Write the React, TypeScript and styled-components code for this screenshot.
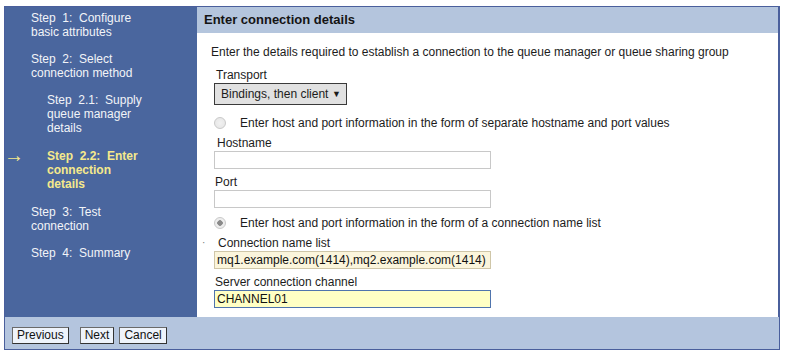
import React from 'react';
import styled, { createGlobalStyle } from 'styled-components';

const GlobalStyle = createGlobalStyle`
  html, body {
    margin: 0;
    padding: 0;
    background: #ffffff;
  }
  body {
    font-family: "Liberation Sans", Arial, sans-serif;
    font-size: 12px;
    color: #1c1c1c;
  }
`;

const Frame = styled.div`
  box-sizing: border-box;
  width: 776px;
  margin: 6px 0 0 4px;
  border: 1px solid #4a5f9c;
  display: flex;
  flex-direction: column;
`;

const Main = styled.div`
  display: flex;
  height: 310px;
`;

const Sidebar = styled.nav`
  box-sizing: border-box;
  width: 192px;
  flex: none;
  background: #4a669e;
  padding: 4px 52px 0 26px;
`;

const StepItem = styled.div<{ $sub?: boolean; $active?: boolean }>`
  position: relative;
  margin: 0 0 ${p => (p.$sub ? '14px' : '13px')} ${p => (p.$sub ? '16px' : '0')};
  font-size: 12px;
  line-height: 14px;
  color: ${p => (p.$active ? '#f5e98c' : '#f2f4f8')};
  font-weight: ${p => (p.$active ? 'bold' : 'normal')};
`;

const Arrow = styled.span`
  position: absolute;
  left: -43px;
  top: -4px;
  font-size: 20px;
  line-height: 20px;
  font-weight: bold;
  color: #f5e98c;
`;

const Content = styled.section`
  flex: 1;
  display: flex;
  flex-direction: column;
  background: #ffffff;
  border-right: 1px solid #4a5f9c;
`;

const Header = styled.div`
  height: 26px;
  line-height: 26px;
  padding-left: 7px;
  background: #b4c5dd;
  font-weight: bold;
  font-size: 13px;
  color: #141414;
`;

const Body = styled.div`
  padding: 12px 14px 0 14px;
`;

const Intro = styled.p`
  margin: 0 0 8px 0;
  line-height: 15px;
`;

const Fields = styled.div`
  margin-left: 3px;
`;

const Label = styled.div<{ $indent?: number }>`
  position: relative;
  line-height: 15px;
  padding-left: ${p => p.$indent ?? 1}px;
`;

const Marker = styled.span`
  position: absolute;
  left: -12px;
  top: -1px;
  color: #777;
  font-size: 10px;
`;

const SelectBox = styled.div`
  box-sizing: border-box;
  display: flex;
  align-items: center;
  justify-content: space-between;
  width: 133px;
  height: 22px;
  padding: 0 5px 0 6px;
  margin-bottom: 9px;
  background: #e1e1e1;
  border: 1px solid #3a3a3a;
  font-size: 12px;
`;

const Caret = styled.span`
  font-size: 9px;
`;

const RadioRow = styled.label`
  display: flex;
  align-items: center;
  height: 17px;
  margin-bottom: 5px;
  gap: 14px;
`;

const RadioDot = styled.span<{ $checked?: boolean }>`
  box-sizing: border-box;
  width: 12px;
  height: 12px;
  border-radius: 50%;
  border: 1px solid #c9c9c9;
  background: radial-gradient(circle, ${p => (p.$checked ? '#8a8a8a 0 2.5px, #ededed 3px' : '#f1f1f1 0, #e4e4e4 100%')});
  flex: none;
`;

const Field = styled.div`
  margin-bottom: 6px;
`;

const TextInput = styled.div<{ $variant?: 'plain' | 'list' | 'focus' }>`
  box-sizing: border-box;
  width: 277px;
  height: 18px;
  line-height: 16px;
  padding-left: 2px;
  font-size: 12px;
  white-space: nowrap;
  overflow: hidden;
  color: #111;
  background: ${p =>
    p.$variant === 'list' ? '#fbf5dc' : p.$variant === 'focus' ? '#ffffc4' : '#ffffff'};
  border: 1px solid
    ${p => (p.$variant === 'list' ? '#cfc6a8' : p.$variant === 'focus' ? '#4f74ad' : '#c8c8c8')};
`;

const Footer = styled.div`
  height: 32px;
  box-sizing: border-box;
  padding: 10px 0 0 7px;
  background: #b4c5de;
  display: flex;
  gap: 5px;
  align-items: flex-start;
`;

const WizardButton = styled.button<{ $spaced?: boolean }>`
  height: 17px;
  padding: 0 4px;
  margin-right: ${p => (p.$spaced ? '6px' : '0')};
  font-family: "Liberation Sans", Arial, sans-serif;
  font-size: 12px;
  line-height: 15px;
  color: #111;
  background: #eef3fb;
  border: 1px solid #6a6a6a;
  border-right-color: #333;
  border-bottom-color: #333;
  border-radius: 0;
`;

const steps = [
  { text: 'Step\u00a0 1:\u00a0 Configure basic attributes' },
  { text: 'Step\u00a0 2:\u00a0 Select connection method' },
  { text: 'Step\u00a0 2.1:\u00a0 Supply queue manager details', sub: true },
  { text: 'Step\u00a0 2.2:\u00a0 Enter connection details', sub: true, active: true },
  { text: 'Step\u00a0 3:\u00a0 Test connection' },
  { text: 'Step\u00a0 4:\u00a0 Summary' },
];

export default function App() {
  return (
    <>
      <GlobalStyle />
      <Frame>
        <Main>
          <Sidebar>
            {steps.map(s => (
              <StepItem key={s.text} $sub={s.sub} $active={s.active}>
                {s.active && <Arrow>→</Arrow>}
                {s.text}
              </StepItem>
            ))}
          </Sidebar>
          <Content>
            <Header>Enter connection details</Header>
            <Body>
              <Intro>
                Enter the details required to establish a connection to the queue manager or queue
                sharing group
              </Intro>
              <Fields>
                <Label $indent={2}>Transport</Label>
                <SelectBox>
                  <span>Bindings, then client</span>
                  <Caret>▼</Caret>
                </SelectBox>
                <RadioRow>
                  <RadioDot />
                  <span>Enter host and port information in the form of separate hostname and port values</span>
                </RadioRow>
                <Field>
                  <Label $indent={3}>Hostname</Label>
                  <TextInput />
                </Field>
                <Field>
                  <Label>Port</Label>
                  <TextInput />
                </Field>
                <RadioRow>
                  <RadioDot $checked />
                  <span>Enter host and port information in the form of a connection name list</span>
                </RadioRow>
                <Field>
                  <Label $indent={4}>
                    <Marker>·</Marker>
                    Connection name list
                  </Label>
                  <TextInput $variant="list">mq1.example.com(1414),mq2.example.com(1414)</TextInput>
                </Field>
                <Field>
                  <Label>Server connection channel</Label>
                  <TextInput $variant="focus">CHANNEL01</TextInput>
                </Field>
              </Fields>
            </Body>
          </Content>
        </Main>
        <Footer>
          <WizardButton $spaced>Previous</WizardButton>
          <WizardButton>Next</WizardButton>
          <WizardButton>Cancel</WizardButton>
        </Footer>
      </Frame>
    </>
  );
}
